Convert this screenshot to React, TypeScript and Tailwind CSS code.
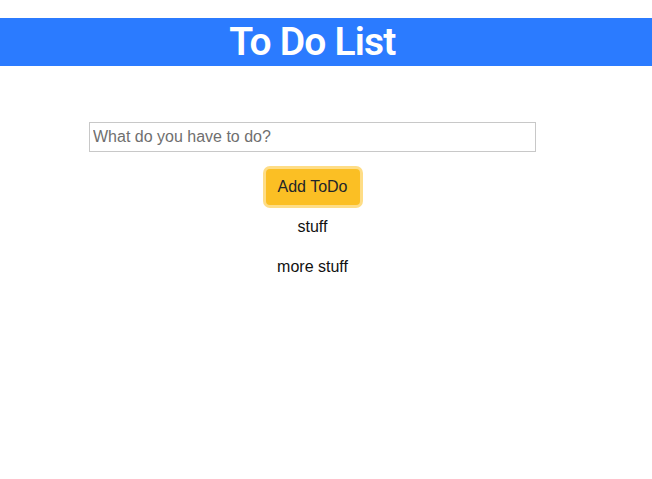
export default function App() {
  return (
    <div className="min-h-[479px] bg-white" style={{ fontFamily: '"Liberation Sans", Arial, sans-serif' }}>
      <div className="pt-[18px]">
        <div className="bg-[#2b7bff] h-[48px]">
          <h1
            className="w-[625px] text-center text-white text-[39px] leading-[48px] font-semibold tracking-[-0.8px]"
            style={{ fontFamily: 'Roboto, "Liberation Sans", sans-serif' }}
          >
            To Do List
          </h1>
        </div>
      </div>
      <div className="w-[625px] flex flex-col items-center pt-[56px]">
        <input
          type="text"
          placeholder="What do you have to do?"
          className="w-[447px] h-[30px] border border-[#c8c8c8] px-[3px] text-[16px] text-[#333] placeholder:text-[#6f6f6f] outline-none"
        />
        <button className="mt-[17px] w-[94px] h-[36px] rounded-[4px] bg-[#fbbf24] text-[16px] text-[#212529] shadow-[0_0_0_3px_#fedd86]">
          Add ToDo
        </button>
        <p className="mt-[10px] text-[16px] leading-[24px] text-[#111]">stuff</p>
        <p className="mt-[16px] text-[16px] leading-[24px] text-[#111]">more stuff</p>
      </div>
    </div>
  );
}
